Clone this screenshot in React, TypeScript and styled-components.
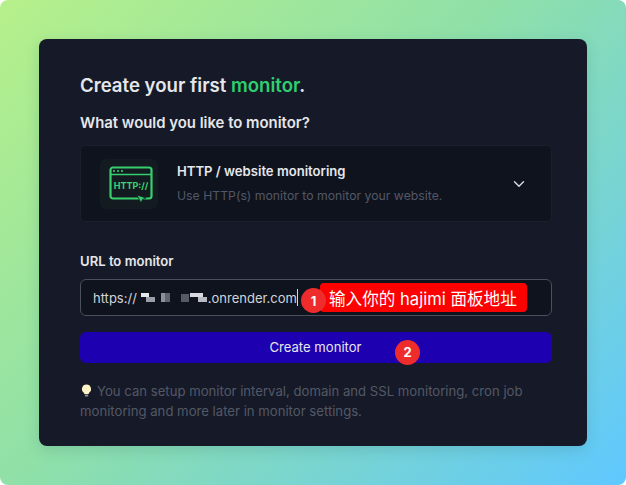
import React from 'react';
import styled, { createGlobalStyle } from 'styled-components';
import { ChevronDown } from 'lucide-react';

const GlobalStyle = createGlobalStyle`
  html, body {
    margin: 0;
    padding: 0;
    background: #fff;
  }
  * {
    box-sizing: border-box;
  }
`;

const Backdrop = styled.div`
  width: 626px;
  height: 485px;
  padding: 39px;
  border-radius: 8px;
  overflow: hidden;
  background: linear-gradient(135deg, #b6f08a 0%, #8fe0a8 45%, #5fc8ff 100%);
  font-family: Inter, "Noto Sans CJK SC", sans-serif;
`;

const Card = styled.main`
  width: 548px;
  height: 407px;
  padding: 34px 35px 0 41px;
  border-radius: 8px;
  background: #161a28;
  box-shadow: 0 4px 14px rgba(40, 90, 90, 0.18);
`;

const Title = styled.h1`
  margin: 0;
  font-size: 18.6px;
  line-height: 24px;
  font-weight: 600;
  color: #e5e7eb;
`;

const Accent = styled.span`
  color: #2fce6e;
`;

const Subtitle = styled.h2`
  margin: 16px 0 0;
  font-size: 14.9px;
  line-height: 20px;
  font-weight: 600;
  color: #e5e7eb;
`;

const MonitorSelect = styled.div`
  display: flex;
  align-items: center;
  height: 77px;
  margin-top: 12px;
  padding: 0 23px 0 19px;
  border-radius: 6px;
  border: 1px solid #1a1f2d;
  background: #0f131e;
`;

const IconTile = styled.div`
  display: flex;
  align-items: center;
  justify-content: center;
  flex: none;
  width: 58px;
  height: 50px;
  padding: 3px 0 0 4px;
  border-radius: 6px;
  background: #131b20;
`;

const OptionText = styled.div`
  flex: 1;
  margin-left: 19px;
`;

const OptionTitle = styled.div`
  font-size: 13.1px;
  line-height: 18px;
  font-weight: 600;
  color: #e5e7eb;
`;

const OptionHint = styled.div`
  margin-top: 7px;
  font-size: 12.25px;
  line-height: 18px;
  color: #535866;
`;

const Chevron = styled(ChevronDown)`
  color: #d1d5db;
`;

const FieldLabel = styled.label`
  display: block;
  margin-top: 30px;
  font-size: 13.1px;
  line-height: 18px;
  font-weight: 600;
  color: #e5e7eb;
`;

const UrlField = styled.div`
  position: relative;
  display: flex;
  align-items: center;
  height: 37px;
  margin-top: 9px;
  padding-left: 12px;
  border-radius: 6px;
  border: 1px solid #4a4f5c;
  background: #0f131e;
  font-size: 13px;
  color: #d1d5db;
`;

const Redacted = styled.svg`
  flex: none;
  margin: 0 0 0 4px;
`;

const Caret = styled.span`
  width: 1px;
  height: 17px;
  background: #d1d5db;
`;

const StepBadge = styled.span<{ $left: number; $top: number }>`
  position: absolute;
  left: ${p => p.$left}px;
  top: ${p => p.$top}px;
  z-index: 2;
  display: flex;
  align-items: center;
  justify-content: center;
  width: 25px;
  height: 25px;
  border-radius: 50%;
  background: #ee2c2c;
  color: #fff;
  font-size: 13px;
  font-weight: 700;
`;

const Callout = styled.span`
  position: absolute;
  left: 239px;
  top: 3px;
  display: flex;
  align-items: center;
  width: 207px;
  height: 29px;
  padding-left: 9px;
  border-radius: 4px;
  background: #fe0000;
  color: #fff;
  font-size: 16.6px;
  font-weight: 400;
  white-space: nowrap;
`;

const SubmitButton = styled.button`
  position: relative;
  display: block;
  width: 100%;
  height: 31px;
  margin-top: 16px;
  padding: 0 1px 0 0;
  border: 0;
  border-radius: 6px;
  background: #1d00b0;
  color: #e5e7eb;
  font-family: inherit;
  font-size: 13.1px;
  font-weight: 400;
  line-height: 31px;
`;

const Tip = styled.p`
  margin: 18px 0 0;
  font-size: 13.15px;
  line-height: 20px;
  color: #535866;
`;

const TipBulb = styled.svg`
  margin: 0 5px 0 1px;
  vertical-align: -1px;
`;

const HttpIcon = () => (
  <svg width="44" height="38" viewBox="0 0 44 38" fill="none">
    <rect x="1.5" y="1.5" width="41" height="31" rx="2.5" stroke="#36cf6e" strokeWidth="2.2" />
    <path d="M1.5 8.5H42.5" stroke="#36cf6e" strokeWidth="1.6" />
    <circle cx="5" cy="5" r="1.1" fill="#36cf6e" />
    <circle cx="9" cy="5" r="1.1" fill="#36cf6e" />
    <circle cx="13" cy="5" r="1.1" fill="#36cf6e" />
    <text x="22" y="23" textAnchor="middle" fontFamily="Inter, sans-serif" fontSize="9" fontWeight="700" fill="#3ad674">
      HTTP://
    </text>
    <path d="M28 29l9 3-3.5 1.5-1.5 3.5z" fill="#36cf6e" stroke="#131b20" strokeWidth="0.8" />
  </svg>
);

const App: React.FC = () => {
  return (
    <>
      <GlobalStyle />
      <Backdrop>
        <Card>
          <Title>
            Create your first <Accent>monitor</Accent>.
          </Title>
          <Subtitle>What would you like to monitor?</Subtitle>
          <MonitorSelect>
            <IconTile>
              <HttpIcon />
            </IconTile>
            <OptionText>
              <OptionTitle>HTTP / website monitoring</OptionTitle>
              <OptionHint>Use HTTP(s) monitor to monitor your website.</OptionHint>
            </OptionText>
            <Chevron size={18} strokeWidth={2} />
          </MonitorSelect>
          <FieldLabel>URL to monitor</FieldLabel>
          <UrlField>
            https://
            <Redacted width="67" height="12" viewBox="0 0 67 12">
              <rect x="0" y="1" width="8" height="4" fill="#e5e7eb" />
              <rect x="5" y="5" width="9" height="5" fill="#9a9ea8" />
              <rect x="20" y="1" width="4" height="9" fill="#8c909a" />
              <rect x="24" y="1" width="5" height="9" fill="#5f6470" />
              <rect x="40" y="2" width="8" height="8" fill="#555a66" />
              <rect x="49" y="1" width="13" height="4" fill="#d8dae0" />
              <rect x="57" y="5" width="9" height="5" fill="#b8bbc3" />
            </Redacted>
            .onrender.com
            <Caret />
            <StepBadge $left={220} $top={8}>1</StepBadge>
            <Callout>输入你的 hajimi 面板地址</Callout>
          </UrlField>
          <SubmitButton>
            Create monitor
            <StepBadge $left={315} $top={8}>2</StepBadge>
          </SubmitButton>
          <Tip>
            <TipBulb width="11" height="13" viewBox="0 0 11 13">
              <path d="M5.5 0.5a4.5 4.5 0 0 1 2.6 8.2L7.6 10H3.4L2.9 8.7A4.5 4.5 0 0 1 5.5 0.5z" fill="#fdf3c4" />
              <rect x="3.8" y="10.5" width="3.4" height="2" rx="0.6" fill="#8a8f99" />
            </TipBulb>
            You can setup monitor interval, domain and SSL monitoring, cron job monitoring and more later in monitor settings.
          </Tip>
        </Card>
      </Backdrop>
    </>
  );
};

export default App;
